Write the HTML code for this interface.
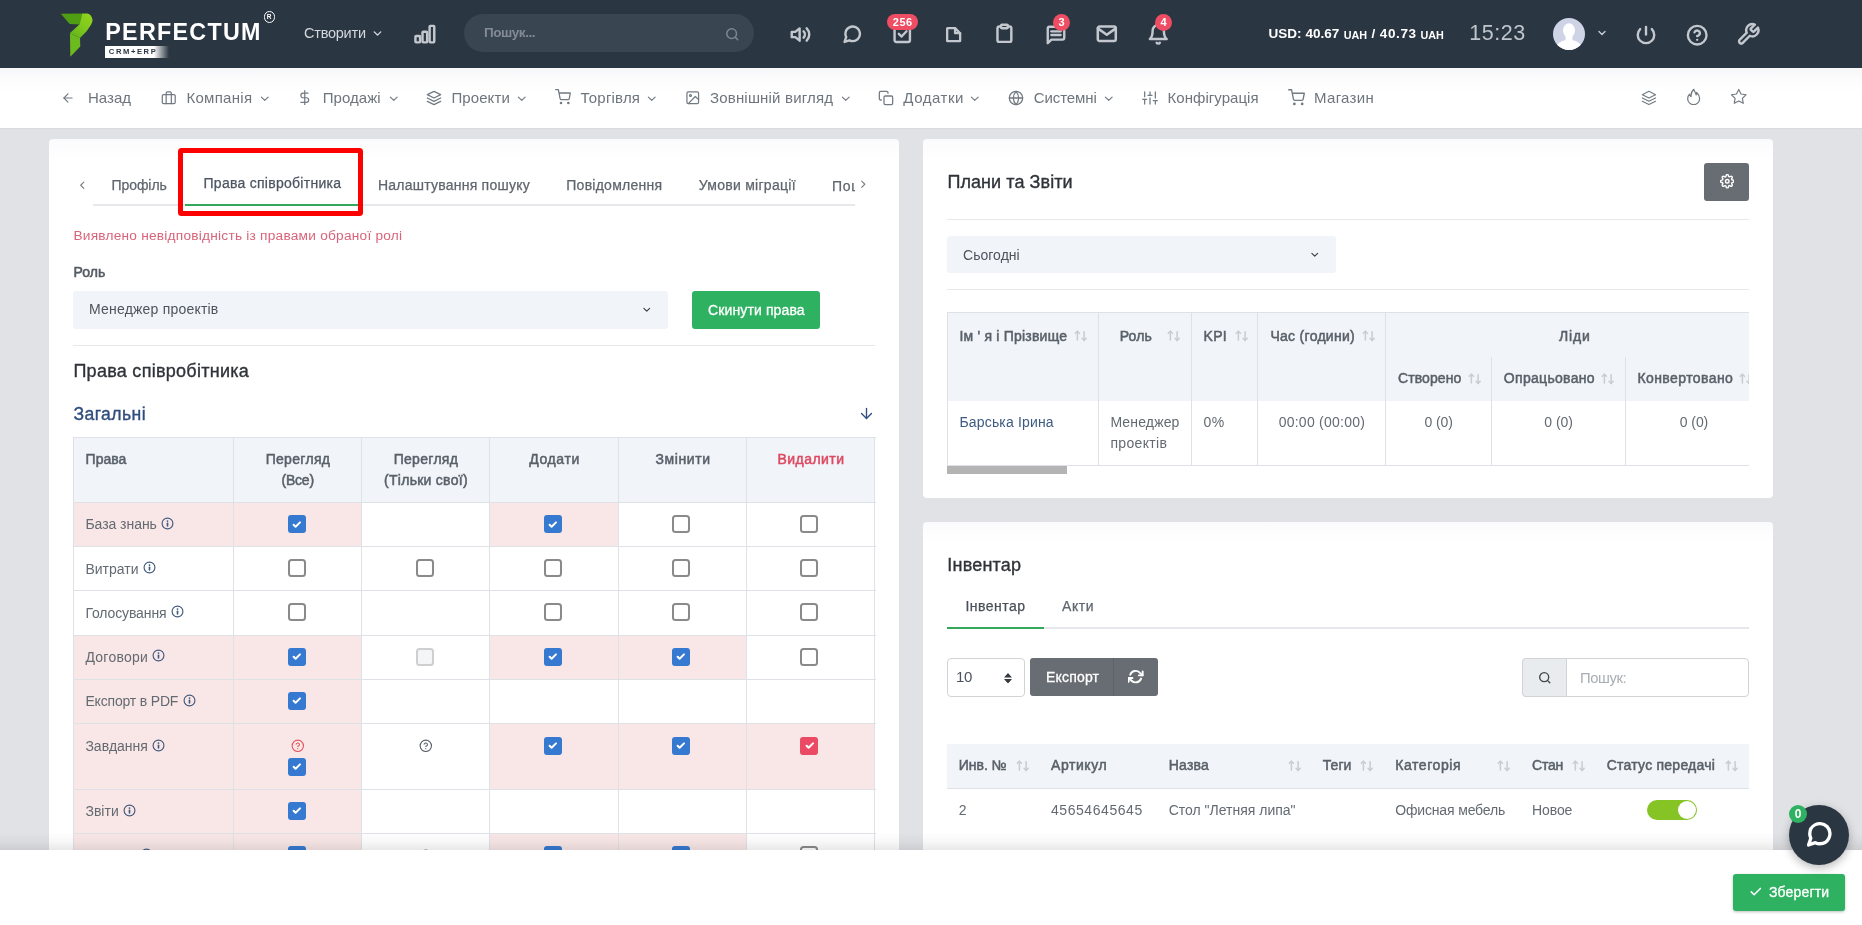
<!DOCTYPE html>
<html lang="uk"><head><meta charset="utf-8"><title>Perfectum CRM+ERP</title>
<style>
html,body{margin:0;padding:0}
body{width:1862px;height:925px;overflow:hidden;position:relative;background:#e1e2e5;font-family:"Liberation Sans",sans-serif;}
.a{position:absolute;box-sizing:border-box}
.t{white-space:pre}
</style></head>
<body>
<div class="a" style="left:0;top:0;width:1862px;height:925px;overflow:hidden;will-change:transform">
<div class="a" style="left:0px;top:0px;width:1862px;height:68px;background:#2b3643;"></div>
<svg class="a" style="left:58px;top:10px" width="40" height="50" viewBox="58 10 40 50">
<defs><linearGradient id="lg2" x1="1" y1="0" x2="0.200" y2="1"><stop offset="0" stop-color="#93d61b"/><stop offset=".55" stop-color="#7fc81d"/><stop offset="1" stop-color="#64b31c"/></linearGradient></defs>
<polygon points="60.800,13.700 83,13.500 81.500,19 79.800,24.400 69.700,23.900" fill="#4f9d12"/>
<path d="M82.400,13.600 Q85,13.200 87.500,13.600 Q91.800,14.600 92.600,20.300 Q92.300,23 90.500,25.600 L86.400,31.500 L80,37.900 L70,33.100 L79.600,24.300 Q81.200,19 82.400,13.600 Z" fill="url(#lg2)"/>
<polygon points="70,33.100 80,37.900 80.300,46.500 70.300,56.700" fill="#6cba1e"/>
</svg>
<div class="a t" style="top:17.78px;font-size:23.3px;line-height:28px;color:#fff;font-weight:700;letter-spacing:1.278px;left:105.3px;">PERFECTUM</div>
<div class="a" style="left:263.5px;top:11.4px;width:11.2px;height:11.2px;border:1.300px solid #fff;border-radius:6px;"></div>
<div class="a t" style="top:13.35px;font-size:6.5px;line-height:8px;color:#fff;font-weight:700;left:-30.90px;width:600px;text-align:center;">R</div>
<div class="a" style="left:105.4px;top:45.5px;width:63.4px;height:12.2px;background:linear-gradient(90deg,#fff 0,#fff 76%,rgba(255,255,255,0) 100%);"></div>
<div class="a t" style="top:46.57px;font-size:7.6px;line-height:10px;color:#2b3643;font-weight:700;letter-spacing:1.604px;left:108.8px;">CRM+ERP</div>
<div class="a t" style="top:22.98px;font-size:14.5px;line-height:20px;color:#d5d9de;letter-spacing:-0.232px;left:304px;">Створити</div>
<svg class="a" style="left:370.5px;top:26.8px;" width="13" height="13" viewBox="0 0 24 24" fill="none" stroke="#d5d9de" stroke-width="2.6" stroke-linecap="round" stroke-linejoin="round"><polyline points="6 9 12 15 18 9"/></svg>
<svg class="a" style="left:412.6px;top:22.2px;" width="23.3" height="23.3" viewBox="0 0 24 24" fill="none" stroke="#c3c8ce" stroke-width="2.5" stroke-linecap="round" stroke-linejoin="round"><rect x="2.500" y="14.500" width="4.800" height="6.500" rx=".8"/><rect x="9.800" y="10" width="4.800" height="11" rx=".8"/><rect x="17.100" y="4" width="4.800" height="17" rx=".8"/></svg>
<div class="a" style="left:464px;top:14px;width:290px;height:38px;background:#3a4552;border-radius:19px;"></div>
<div class="a t" style="top:23.32px;font-size:13.5px;line-height:20px;color:#828b95;font-weight:700;letter-spacing:-0.460px;left:484px;">Пошук...</div>
<svg class="a" style="left:725px;top:26.5px;" width="14.5" height="14.5" viewBox="0 0 24 24" fill="none" stroke="#7d8690" stroke-width="2.6" stroke-linecap="round" stroke-linejoin="round"><circle cx="11" cy="11" r="8"/><line x1="21" y1="21" x2="16.65" y2="16.65"/></svg>
<svg class="a" style="left:790px;top:23.6px;" width="21" height="21" viewBox="0 0 24 24" fill="none" stroke="#c3c8ce" stroke-width="2.8" stroke-linecap="round" stroke-linejoin="round"><polygon points="11 5 6 9 2 9 2 15 6 15 11 19 11 5"/><path d="M19.07 4.93a10 10 0 0 1 0 14.14M15.54 8.46a5 5 0 0 1 0 7.07"/></svg>
<svg class="a" style="left:841.5px;top:23.8px;" width="20.5" height="20.5" viewBox="0 0 24 24" fill="none" stroke="#c3c8ce" stroke-width="2.8" stroke-linecap="round" stroke-linejoin="round"><path d="M21 11.5a8.38 8.38 0 0 1-.9 3.8 8.5 8.5 0 0 1-7.6 4.7 8.38 8.38 0 0 1-3.8-.9L3 21l1.9-5.7a8.38 8.38 0 0 1-.9-3.8 8.5 8.5 0 0 1 4.7-7.6 8.38 8.38 0 0 1 3.8-.9h.5a8.48 8.48 0 0 1 8 8v.5z"/></svg>
<svg class="a" style="left:891.5px;top:23.9px;" width="20.5" height="20.5" viewBox="0 0 24 24" fill="none" stroke="#c3c8ce" stroke-width="2.8" stroke-linecap="round" stroke-linejoin="round"><rect x="3" y="3" width="18" height="18" rx="2"/><polyline points="8 11.500 11.200 14.700 17 8.500"/></svg>
<svg class="a" style="left:945.3px;top:25.8px;" width="17.3" height="17.3" viewBox="0 0 24 24" fill="none" stroke="#c3c8ce" stroke-width="3.2" stroke-linecap="round" stroke-linejoin="round"><path d="M14 3H3.600a.6.6 0 0 0-.6.6v16.800a.6.6 0 0 0 .6.6h16.800a.6.6 0 0 0 .6-.6V10z"/><polyline points="14 3 14 10 21 10"/></svg>
<svg class="a" style="left:994.3px;top:22.6px;" width="20.8" height="20.8" viewBox="0 0 24 24" fill="none" stroke="#c3c8ce" stroke-width="2.8" stroke-linecap="round" stroke-linejoin="round"><path d="M16 4h2a2 2 0 0 1 2 2v14a2 2 0 0 1-2 2H6a2 2 0 0 1-2-2V6a2 2 0 0 1 2-2h2"/><rect x="8" y="2" width="8" height="4" rx="1" ry="1"/></svg>
<svg class="a" style="left:1045px;top:23.5px;" width="22" height="22" viewBox="0 0 24 24" fill="none" stroke="#c3c8ce" stroke-width="2.6" stroke-linecap="round" stroke-linejoin="round"><path d="M21 15a2 2 0 0 1-2 2H7l-4 4V5a2 2 0 0 1 2-2h14a2 2 0 0 1 2 2z"/><line x1="7" y1="8" x2="17" y2="8"/><line x1="7" y1="12" x2="17" y2="12"/></svg>
<svg class="a" style="left:1096.2px;top:23.1px;" width="21.6" height="21.6" viewBox="0 0 24 24" fill="none" stroke="#c3c8ce" stroke-width="2.8" stroke-linecap="round" stroke-linejoin="round"><path d="M4 4h16c1.1 0 2 .9 2 2v12c0 1.1-.9 2-2 2H4c-1.1 0-2-.9-2-2V6c0-1.1.9-2 2-2z"/><polyline points="22,6 12,13 2,6"/></svg>
<svg class="a" style="left:1147px;top:23px;" width="22.5" height="22.5" viewBox="0 0 24 24" fill="none" stroke="#c3c8ce" stroke-width="2.6" stroke-linecap="round" stroke-linejoin="round"><path d="M18 8A6 6 0 0 0 6 8c0 7-3 9-3 9h18s-3-2-3-9"/><path d="M13.73 21a2 2 0 0 1-3.46 0"/></svg>
<div class="a" style="left:887px;top:14px;width:31px;height:16px;background:#ee4d64;border-radius:8px;"></div>
<div class="a t" style="top:15.19px;font-size:11px;line-height:14px;color:#fff;font-weight:700;letter-spacing:0.573px;left:602.79px;width:600px;text-align:center;">256</div>
<div class="a" style="left:1053px;top:14px;width:17px;height:16.5px;background:#ee4d64;border-radius:8.5px;"></div>
<div class="a t" style="top:15.39px;font-size:11px;line-height:14px;color:#fff;font-weight:700;left:761.50px;width:600px;text-align:center;">3</div>
<div class="a" style="left:1155px;top:14px;width:17px;height:16.5px;background:#ee4d64;border-radius:8.5px;"></div>
<div class="a t" style="top:15.39px;font-size:11px;line-height:14px;color:#fff;font-weight:700;left:863.50px;width:600px;text-align:center;">4</div>
<div class="a t" style="top:23.62px;font-size:13.5px;line-height:20px;color:#fff;font-weight:700;letter-spacing:0.007px;left:1268.6px;">USD: 40.67</div>
<div class="a t" style="top:24.56px;font-size:10.8px;line-height:20px;color:#fff;font-weight:700;letter-spacing:-0.099px;left:1343.8px;">UAH</div>
<div class="a t" style="top:23.62px;font-size:13.5px;line-height:20px;color:#fff;font-weight:700;left:1371.4px;">/</div>
<div class="a t" style="top:23.62px;font-size:13.5px;line-height:20px;color:#fff;font-weight:700;letter-spacing:0.604px;left:1379.8px;">40.73</div>
<div class="a t" style="top:24.56px;font-size:10.8px;line-height:20px;color:#fff;font-weight:700;letter-spacing:-0.099px;left:1420.5px;">UAH</div>
<div class="a t" style="top:20.15px;font-size:21.5px;line-height:26px;color:#bfc5cc;letter-spacing:0.549px;left:1469.3px;">15:23</div>
<svg class="a" style="left:1553px;top:17.500px" width="32" height="32" viewBox="0 0 32 32"><defs><clipPath id="av"><circle cx="16" cy="16" r="16"/></clipPath></defs>
<circle cx="16" cy="16" r="16" fill="#ced3e6"/><g clip-path="url(#av)" fill="#fff"><ellipse cx="16" cy="12.500" rx="6" ry="7.200"/><path d="M12.500 17.500h7v4.500c3 1.200 7 2 8.500 5.500V33H4v-5.500c1.500-3.500 5.500-4.300 8.500-5.500z"/></g></svg>
<svg class="a" style="left:1595.5px;top:27px;" width="12" height="12" viewBox="0 0 24 24" fill="none" stroke="#c8cdd3" stroke-width="2.8" stroke-linecap="round" stroke-linejoin="round"><polyline points="6 9 12 15 18 9"/></svg>
<svg class="a" style="left:1635px;top:22.5px;" width="22" height="22" viewBox="0 0 24 24" fill="none" stroke="#c3c8ce" stroke-width="2.6" stroke-linecap="round" stroke-linejoin="round"><path d="M18.36 6.64a9 9 0 1 1-12.73 0"/><line x1="12" y1="4.200" x2="12" y2="12.500"/></svg>
<svg class="a" style="left:1685.6px;top:23.7px;" width="22.4" height="22.4" viewBox="0 0 24 24" fill="none" stroke="#c3c8ce" stroke-width="2.5" stroke-linecap="round" stroke-linejoin="round"><circle cx="12" cy="12" r="10"/><path d="M9.09 9a3 3 0 0 1 5.83 1c0 2-3 3-3 3"/><line x1="12" y1="17" x2="12.01" y2="17"/></svg>
<svg class="a" style="left:1735.5px;top:22px;" width="24.5" height="24.5" viewBox="0 0 24 24" fill="none" stroke="#c3c8ce" stroke-width="2.4" stroke-linecap="round" stroke-linejoin="round"><path d="M14.7 6.3a1 1 0 0 0 0 1.4l1.6 1.6a1 1 0 0 0 1.4 0l3.77-3.77a6 6 0 0 1-7.94 7.94l-6.91 6.91a2.12 2.12 0 0 1-3-3l6.91-6.91a6 6 0 0 1 7.94-7.94l-3.76 3.76z"/></svg>
<div class="a" style="left:0px;top:68px;width:1862px;height:60px;background:linear-gradient(180deg,#f7f7f9 0,#fcfcfd 12px,#fff 24px);"></div>
<div class="a" style="left:0px;top:128px;width:1862px;height:2px;background:linear-gradient(180deg,rgba(0,0,0,.035),rgba(0,0,0,0));"></div>
<svg class="a" style="left:61px;top:90.5px;" width="14" height="14" viewBox="0 0 24 24" fill="none" stroke="#727a82" stroke-width="2" stroke-linecap="round" stroke-linejoin="round"><line x1="19" y1="12" x2="5" y2="12"/><polyline points="12 19 5 12 12 5"/></svg>
<div class="a t" style="top:87.70px;font-size:15px;line-height:20px;color:#6d757d;letter-spacing:0.005px;left:88px;">Назад</div>
<svg class="a" style="left:161px;top:89.75px;" width="15.5" height="15.5" viewBox="0 0 24 24" fill="none" stroke="#727a82" stroke-width="1.9" stroke-linecap="round" stroke-linejoin="round"><rect x="2" y="7" width="20" height="14" rx="2" ry="2"/><path d="M16 21V5a2 2 0 0 0-2-2h-4a2 2 0 0 0-2 2v16"/></svg>
<div class="a t" style="top:87.70px;font-size:15px;line-height:20px;color:#6d757d;letter-spacing:0.272px;left:186.5px;">Компанія</div>
<svg class="a" style="left:257.8px;top:91.5px;" width="13.5" height="13.5" viewBox="0 0 24 24" fill="none" stroke="#727a82" stroke-width="2.1" stroke-linecap="round" stroke-linejoin="round"><polyline points="6 9 12 15 18 9"/></svg>
<svg class="a" style="left:296.5px;top:89.75px;" width="15.5" height="15.5" viewBox="0 0 24 24" fill="none" stroke="#727a82" stroke-width="1.9" stroke-linecap="round" stroke-linejoin="round"><line x1="12" y1="1" x2="12" y2="23"/><path d="M17 5H9.5a3.5 3.5 0 0 0 0 7h5a3.5 3.5 0 0 1 0 7H6"/></svg>
<div class="a t" style="top:87.70px;font-size:15px;line-height:20px;color:#6d757d;letter-spacing:0.067px;left:322.7px;">Продажі</div>
<svg class="a" style="left:386.8px;top:91.5px;" width="13.5" height="13.5" viewBox="0 0 24 24" fill="none" stroke="#727a82" stroke-width="2.1" stroke-linecap="round" stroke-linejoin="round"><polyline points="6 9 12 15 18 9"/></svg>
<svg class="a" style="left:425.5px;top:89.5px;" width="16" height="16" viewBox="0 0 24 24" fill="none" stroke="#727a82" stroke-width="1.9" stroke-linecap="round" stroke-linejoin="round"><polygon points="12 2 2 7 12 12 22 7 12 2"/><polyline points="2 17 12 22 22 17"/><polyline points="2 12 12 17 22 12"/></svg>
<div class="a t" style="top:87.70px;font-size:15px;line-height:20px;color:#6d757d;letter-spacing:0.102px;left:451.4px;">Проекти</div>
<svg class="a" style="left:515.3px;top:91.5px;" width="13.5" height="13.5" viewBox="0 0 24 24" fill="none" stroke="#727a82" stroke-width="2.1" stroke-linecap="round" stroke-linejoin="round"><polyline points="6 9 12 15 18 9"/></svg>
<svg class="a" style="left:554.5px;top:89px;" width="16" height="16" viewBox="0 0 24 24" fill="none" stroke="#727a82" stroke-width="1.9" stroke-linecap="round" stroke-linejoin="round"><circle cx="9" cy="21" r="1"/><circle cx="20" cy="21" r="1"/><path d="M1 1h4l2.68 13.39a2 2 0 0 0 2 1.61h9.72a2 2 0 0 0 2-1.61L23 6H6"/></svg>
<div class="a t" style="top:87.70px;font-size:15px;line-height:20px;color:#6d757d;letter-spacing:0.203px;left:580.6px;">Торгівля</div>
<svg class="a" style="left:645.3px;top:91.5px;" width="13.5" height="13.5" viewBox="0 0 24 24" fill="none" stroke="#727a82" stroke-width="2.1" stroke-linecap="round" stroke-linejoin="round"><polyline points="6 9 12 15 18 9"/></svg>
<svg class="a" style="left:684.5px;top:89.75px;" width="15.5" height="15.5" viewBox="0 0 24 24" fill="none" stroke="#727a82" stroke-width="1.9" stroke-linecap="round" stroke-linejoin="round"><rect x="3" y="3" width="18" height="18" rx="2" ry="2"/><circle cx="8.5" cy="8.5" r="1.5"/><polyline points="21 15 16 10 5 21"/></svg>
<div class="a t" style="top:87.70px;font-size:15px;line-height:20px;color:#6d757d;letter-spacing:0.180px;left:710px;">Зовнішній вигляд</div>
<svg class="a" style="left:838.8px;top:91.5px;" width="13.5" height="13.5" viewBox="0 0 24 24" fill="none" stroke="#727a82" stroke-width="2.1" stroke-linecap="round" stroke-linejoin="round"><polyline points="6 9 12 15 18 9"/></svg>
<svg class="a" style="left:878px;top:89.5px;" width="16" height="16" viewBox="0 0 24 24" fill="none" stroke="#727a82" stroke-width="1.9" stroke-linecap="round" stroke-linejoin="round"><rect x="9" y="9" width="13" height="13" rx="2" ry="2"/><path d="M5 15H4a2 2 0 0 1-2-2V4a2 2 0 0 1 2-2h9a2 2 0 0 1 2 2v1"/></svg>
<div class="a t" style="top:87.70px;font-size:15px;line-height:20px;color:#6d757d;letter-spacing:0.547px;left:903.3px;">Додатки</div>
<svg class="a" style="left:968.3px;top:91.5px;" width="13.5" height="13.5" viewBox="0 0 24 24" fill="none" stroke="#727a82" stroke-width="2.1" stroke-linecap="round" stroke-linejoin="round"><polyline points="6 9 12 15 18 9"/></svg>
<svg class="a" style="left:1008px;top:89.5px;" width="16" height="16" viewBox="0 0 24 24" fill="none" stroke="#727a82" stroke-width="1.9" stroke-linecap="round" stroke-linejoin="round"><circle cx="12" cy="12" r="10"/><line x1="2" y1="12" x2="22" y2="12"/><path d="M12 2a15.3 15.3 0 0 1 4 10 15.3 15.3 0 0 1-4 10 15.3 15.3 0 0 1-4-10 15.3 15.3 0 0 1 4-10z"/></svg>
<div class="a t" style="top:87.70px;font-size:15px;line-height:20px;color:#6d757d;letter-spacing:-0.083px;left:1033.7px;">Системні</div>
<svg class="a" style="left:1102.3px;top:91.5px;" width="13.5" height="13.5" viewBox="0 0 24 24" fill="none" stroke="#727a82" stroke-width="2.1" stroke-linecap="round" stroke-linejoin="round"><polyline points="6 9 12 15 18 9"/></svg>
<svg class="a" style="left:1141.5px;top:89.5px;" width="16" height="16" viewBox="0 0 24 24" fill="none" stroke="#727a82" stroke-width="1.9" stroke-linecap="round" stroke-linejoin="round"><line x1="4" y1="21" x2="4" y2="14"/><line x1="4" y1="10" x2="4" y2="3"/><line x1="12" y1="21" x2="12" y2="12"/><line x1="12" y1="8" x2="12" y2="3"/><line x1="20" y1="21" x2="20" y2="16"/><line x1="20" y1="12" x2="20" y2="3"/><line x1="1" y1="14" x2="7" y2="14"/><line x1="9" y1="8" x2="15" y2="8"/><line x1="17" y1="16" x2="23" y2="16"/></svg>
<div class="a t" style="top:87.70px;font-size:15px;line-height:20px;color:#6d757d;letter-spacing:0.048px;left:1167.5px;">Конфігурація</div>
<svg class="a" style="left:1288px;top:89px;" width="17" height="17" viewBox="0 0 24 24" fill="none" stroke="#727a82" stroke-width="1.9" stroke-linecap="round" stroke-linejoin="round"><circle cx="9" cy="21" r="1"/><circle cx="20" cy="21" r="1"/><path d="M1 1h4l2.68 13.39a2 2 0 0 0 2 1.61h9.72a2 2 0 0 0 2-1.61L23 6H6"/></svg>
<div class="a t" style="top:87.70px;font-size:15px;line-height:20px;color:#6d757d;letter-spacing:0.323px;left:1314px;">Магазин</div>
<svg class="a" style="left:1641px;top:89.9px;" width="15.9" height="15.9" viewBox="0 0 24 24" fill="none" stroke="#727a82" stroke-width="1.7" stroke-linecap="round" stroke-linejoin="round"><polygon points="12 2 2 7 12 12 22 7 12 2"/><polyline points="2 17 12 22 22 17"/><polyline points="2 12 12 17 22 12"/></svg>
<svg class="a" style="left:1685.2px;top:87.9px;" width="17.3" height="17.3" viewBox="0 0 24 24" fill="none" stroke="#727a82" stroke-width="1.7" stroke-linecap="round" stroke-linejoin="round"><path d="M12.300 1.800C12.600 4.800 15 6.300 15.400 9.400C16.100 8.500 16.400 7.400 16.200 6.200C18.700 8.600 20.300 11.800 20.300 14.800A8.300 8.300 0 0 1 3.700 14.800C3.700 12.300 4.700 10.200 6.300 8.700C6.500 10.300 7.200 11.500 8.400 12.100C8 8 9.500 4.300 12.300 1.800Z"/></svg>
<svg class="a" style="left:1730px;top:88px;" width="17.5" height="17.5" viewBox="0 0 24 24" fill="none" stroke="#727a82" stroke-width="1.6" stroke-linecap="round" stroke-linejoin="round"><polygon points="12 2 15.09 8.26 22 9.27 17 14.14 18.18 21.02 12 17.77 5.82 21.02 7 14.14 2 9.27 8.91 8.26 12 2"/></svg>
<div class="a" style="left:49px;top:139px;width:850px;height:800px;background:linear-gradient(180deg,#fbfbfd 0,#fff 22px);border-radius:4px;"></div>
<div class="a" style="left:93px;top:204px;width:762px;height:2px;background:#e7e8eb;"></div>
<div class="a" style="left:185px;top:204px;width:173px;height:2px;background:#34a85a;"></div>
<svg class="a" style="left:75.5px;top:178.5px;" width="12.5" height="12.5" viewBox="0 0 24 24" fill="none" stroke="#7a8087" stroke-width="2.2" stroke-linecap="round" stroke-linejoin="round"><polyline points="15 18 9 12 15 6"/></svg>
<svg class="a" style="left:856.5px;top:177.5px;" width="12.5" height="12.5" viewBox="0 0 24 24" fill="none" stroke="#7a8087" stroke-width="2.2" stroke-linecap="round" stroke-linejoin="round"><polyline points="9 18 15 12 9 6"/></svg>
<div class="a t" style="top:175.25px;font-size:14px;line-height:20px;color:#5f666e;letter-spacing:-0.071px;left:111.5px;-webkit-text-stroke:0.25px;">Профіль</div>
<div class="a t" style="top:173.45px;font-size:14px;line-height:20px;color:#4c5562;letter-spacing:0.272px;left:203.5px;-webkit-text-stroke:0.25px;">Права співробітника</div>
<div class="a t" style="top:175.25px;font-size:14px;line-height:20px;color:#5f666e;letter-spacing:0.237px;left:377.9px;-webkit-text-stroke:0.25px;">Налаштування пошуку</div>
<div class="a t" style="top:175.25px;font-size:14px;line-height:20px;color:#5f666e;letter-spacing:0.248px;left:566.3px;-webkit-text-stroke:0.25px;">Повідомлення</div>
<div class="a t" style="top:175.25px;font-size:14px;line-height:20px;color:#5f666e;letter-spacing:0.280px;left:698.7px;-webkit-text-stroke:0.25px;">Умови міграції</div>
<div class="a" style="left:832px;top:170px;width:22.700px;height:30px;overflow:hidden"><div class="a t" style="top:5.55px;font-size:14px;line-height:20px;color:#5f666e;letter-spacing:0.699px;left:0px;-webkit-text-stroke:0.25px;">Пошук</div></div>
<div class="a" style="left:178px;top:148px;width:184.7px;height:67.6px;border:5px solid #fd0000;border-radius:3.5px;"></div>
<div class="a t" style="top:225.55px;font-size:13.7px;line-height:20px;color:#d9647a;letter-spacing:0.230px;left:73.4px;">Виявлено невідповідність із правами обраної ролі</div>
<div class="a t" style="top:262.15px;font-size:14px;line-height:20px;color:#555b63;letter-spacing:0.112px;left:73.4px;-webkit-text-stroke:0.55px;">Роль</div>
<div class="a" style="left:73px;top:291px;width:595px;height:38px;background:#f1f4f8;border-radius:3px;"></div>
<div class="a t" style="top:299.45px;font-size:14px;line-height:20px;color:#4d545c;letter-spacing:0.207px;left:89px;">Менеджер проектів</div>
<svg class="a" style="left:640.5px;top:304.3px;" width="11.5" height="11.5" viewBox="0 0 24 24" fill="none" stroke="#3a4047" stroke-width="2.4" stroke-linecap="round" stroke-linejoin="round"><polyline points="6 9 12 15 18 9"/></svg>
<div class="a" style="left:692px;top:291px;width:128px;height:38px;background:#2fb162;border-radius:3px;"></div>
<div class="a t" style="top:299.75px;font-size:14px;line-height:20px;color:#fff;letter-spacing:0.123px;left:708px;-webkit-text-stroke:0.3px;">Скинути права</div>
<div class="a" style="left:73px;top:345px;width:802px;height:1px;background:#e7e8ea;"></div>
<div class="a t" style="top:360.26px;font-size:18px;line-height:22px;color:#2f3338;letter-spacing:0.273px;left:73.4px;-webkit-text-stroke:0.35px;">Права співробітника</div>
<div class="a t" style="top:402.90px;font-size:17.6px;line-height:22px;color:#2f4d7e;letter-spacing:0.413px;left:73.4px;-webkit-text-stroke:0.35px;">Загальні</div>
<svg class="a" style="left:857.5px;top:405px;" width="17" height="17" viewBox="0 0 24 24" fill="none" stroke="#2f4d7e" stroke-width="1.9" stroke-linecap="round" stroke-linejoin="round"><line x1="12" y1="5" x2="12" y2="19"/><polyline points="19 12 12 19 5 12"/></svg>
<div class="a" style="left:73px;top:437px;width:802px;height:65.30000000000001px;background:#f1f4f8;"></div>
<div class="a" style="left:73px;top:502.3px;width:160px;height:44.099999999999966px;background:#f9e7e7;"></div>
<div class="a" style="left:233px;top:502.3px;width:128px;height:44.099999999999966px;background:#f9e7e7;"></div>
<div class="a" style="left:489px;top:502.3px;width:129px;height:44.099999999999966px;background:#f9e7e7;"></div>
<div class="a" style="left:73px;top:634.7px;width:160px;height:44.19999999999993px;background:#f9e7e7;"></div>
<div class="a" style="left:233px;top:634.7px;width:128px;height:44.19999999999993px;background:#f9e7e7;"></div>
<div class="a" style="left:489px;top:634.7px;width:129px;height:44.19999999999993px;background:#f9e7e7;"></div>
<div class="a" style="left:618px;top:634.7px;width:128px;height:44.19999999999993px;background:#f9e7e7;"></div>
<div class="a" style="left:73px;top:678.9px;width:160px;height:44.30000000000007px;background:#f9e7e7;"></div>
<div class="a" style="left:233px;top:678.9px;width:128px;height:44.30000000000007px;background:#f9e7e7;"></div>
<div class="a" style="left:73px;top:723.2px;width:160px;height:66.19999999999993px;background:#f9e7e7;"></div>
<div class="a" style="left:233px;top:723.2px;width:128px;height:66.19999999999993px;background:#f9e7e7;"></div>
<div class="a" style="left:489px;top:723.2px;width:129px;height:66.19999999999993px;background:#f9e7e7;"></div>
<div class="a" style="left:618px;top:723.2px;width:128px;height:66.19999999999993px;background:#f9e7e7;"></div>
<div class="a" style="left:746px;top:723.2px;width:128px;height:66.19999999999993px;background:#f9e7e7;"></div>
<div class="a" style="left:73px;top:789.4px;width:160px;height:43.80000000000007px;background:#f9e7e7;"></div>
<div class="a" style="left:233px;top:789.4px;width:128px;height:43.80000000000007px;background:#f9e7e7;"></div>
<div class="a" style="left:73px;top:833.2px;width:160px;height:44.19999999999993px;background:#f9e7e7;"></div>
<div class="a" style="left:233px;top:833.2px;width:128px;height:44.19999999999993px;background:#f9e7e7;"></div>
<div class="a" style="left:489px;top:833.2px;width:129px;height:44.19999999999993px;background:#f9e7e7;"></div>
<div class="a" style="left:618px;top:833.2px;width:128px;height:44.19999999999993px;background:#f9e7e7;"></div>
<div class="a" style="left:73px;top:437px;width:803px;height:1px;background:#dee2e6;"></div>
<div class="a" style="left:73px;top:502px;width:803px;height:1px;background:#dee2e6;"></div>
<div class="a" style="left:73px;top:546px;width:803px;height:1px;background:#dee2e6;"></div>
<div class="a" style="left:73px;top:590px;width:803px;height:1px;background:#dee2e6;"></div>
<div class="a" style="left:73px;top:635px;width:803px;height:1px;background:#dee2e6;"></div>
<div class="a" style="left:73px;top:679px;width:803px;height:1px;background:#dee2e6;"></div>
<div class="a" style="left:73px;top:723px;width:803px;height:1px;background:#dee2e6;"></div>
<div class="a" style="left:73px;top:789px;width:803px;height:1px;background:#dee2e6;"></div>
<div class="a" style="left:73px;top:833px;width:803px;height:1px;background:#dee2e6;"></div>
<div class="a" style="left:73px;top:877px;width:803px;height:1px;background:#dee2e6;"></div>
<div class="a" style="left:73px;top:437px;width:1px;height:441px;background:#dee2e6;"></div>
<div class="a" style="left:233px;top:437px;width:1px;height:441px;background:#dee2e6;"></div>
<div class="a" style="left:361px;top:437px;width:1px;height:441px;background:#dee2e6;"></div>
<div class="a" style="left:489px;top:437px;width:1px;height:441px;background:#dee2e6;"></div>
<div class="a" style="left:618px;top:437px;width:1px;height:441px;background:#dee2e6;"></div>
<div class="a" style="left:746px;top:437px;width:1px;height:441px;background:#dee2e6;"></div>
<div class="a" style="left:874px;top:437px;width:1px;height:441px;background:#dee2e6;"></div>
<div class="a t" style="top:448.55px;font-size:14px;line-height:20px;color:#596068;letter-spacing:-0.025px;left:85.6px;-webkit-text-stroke:0.5px;">Права</div>
<div class="a t" style="top:448.55px;font-size:14px;line-height:20px;color:#596068;letter-spacing:0.309px;left:-2.05px;width:600px;text-align:center;-webkit-text-stroke:0.5px;">Перегляд</div>
<div class="a t" style="top:469.55px;font-size:14px;line-height:20px;color:#596068;letter-spacing:-0.237px;left:-2.32px;width:600px;text-align:center;-webkit-text-stroke:0.5px;">(Все)</div>
<div class="a t" style="top:448.55px;font-size:14px;line-height:20px;color:#596068;letter-spacing:0.309px;left:125.95px;width:600px;text-align:center;-webkit-text-stroke:0.5px;">Перегляд</div>
<div class="a t" style="top:469.55px;font-size:14px;line-height:20px;color:#596068;letter-spacing:0.272px;left:125.94px;width:600px;text-align:center;-webkit-text-stroke:0.5px;">(Тільки свої)</div>
<div class="a t" style="top:448.55px;font-size:14px;line-height:20px;color:#596068;letter-spacing:0.600px;left:254.60px;width:600px;text-align:center;-webkit-text-stroke:0.5px;">Додати</div>
<div class="a t" style="top:448.55px;font-size:14px;line-height:20px;color:#596068;letter-spacing:0.587px;left:383.09px;width:600px;text-align:center;-webkit-text-stroke:0.5px;">Змінити</div>
<div class="a t" style="top:448.55px;font-size:14px;line-height:20px;color:#dc4a62;letter-spacing:0.452px;left:511.03px;width:600px;text-align:center;-webkit-text-stroke:0.5px;">Видалити</div>
<div class="a t" style="top:514.40px;font-size:14px;line-height:20px;color:#636a71;letter-spacing:-0.041px;left:85.4px;">База знань</div>
<svg class="a" style="left:161.0px;top:516.95px;" width="13" height="13" viewBox="0 0 24 24" fill="none" stroke="#41597d" stroke-width="2.1" stroke-linecap="round" stroke-linejoin="round"><circle cx="12" cy="12" r="10"/><line x1="12" y1="16.600" x2="12" y2="11.600" stroke-width="3"/><line x1="12" y1="7.600" x2="12.01" y2="7.600" stroke-width="3.300"/></svg>
<div class="a" style="left:288px;top:515.2px;width:18px;height:18px;background:#3579d1;border-radius:3px;"></div>
<svg class="a" style="left:292.3px;top:519.5px;" width="9.6" height="9.6" viewBox="0 0 24 24" fill="none" stroke="#fff" stroke-width="5" stroke-linecap="round" stroke-linejoin="round"><polyline points="20 6 9 17 4 12"/></svg>
<div class="a" style="left:544px;top:515.2px;width:18px;height:18px;background:#3579d1;border-radius:3px;"></div>
<svg class="a" style="left:548.3px;top:519.5px;" width="9.6" height="9.6" viewBox="0 0 24 24" fill="none" stroke="#fff" stroke-width="5" stroke-linecap="round" stroke-linejoin="round"><polyline points="20 6 9 17 4 12"/></svg>
<div class="a" style="left:672.1px;top:515.2px;width:18px;height:18px;background:#fff;border:2px solid #8a8a8a;border-radius:3.5px;"></div>
<div class="a" style="left:800.2px;top:515.2px;width:18px;height:18px;background:#fff;border:2px solid #8a8a8a;border-radius:3.5px;"></div>
<div class="a t" style="top:558.50px;font-size:14px;line-height:20px;color:#636a71;letter-spacing:0.005px;left:85.4px;">Витрати</div>
<svg class="a" style="left:142.6px;top:561.0500000000001px;" width="13" height="13" viewBox="0 0 24 24" fill="none" stroke="#41597d" stroke-width="2.1" stroke-linecap="round" stroke-linejoin="round"><circle cx="12" cy="12" r="10"/><line x1="12" y1="16.600" x2="12" y2="11.600" stroke-width="3"/><line x1="12" y1="7.600" x2="12.01" y2="7.600" stroke-width="3.300"/></svg>
<div class="a" style="left:288px;top:559.3000000000001px;width:18px;height:18px;background:#fff;border:2px solid #8a8a8a;border-radius:3.5px;"></div>
<div class="a" style="left:416px;top:559.3000000000001px;width:18px;height:18px;background:#fff;border:2px solid #8a8a8a;border-radius:3.5px;"></div>
<div class="a" style="left:544px;top:559.3000000000001px;width:18px;height:18px;background:#fff;border:2px solid #8a8a8a;border-radius:3.5px;"></div>
<div class="a" style="left:672.1px;top:559.3000000000001px;width:18px;height:18px;background:#fff;border:2px solid #8a8a8a;border-radius:3.5px;"></div>
<div class="a" style="left:800.2px;top:559.3000000000001px;width:18px;height:18px;background:#fff;border:2px solid #8a8a8a;border-radius:3.5px;"></div>
<div class="a t" style="top:602.65px;font-size:14px;line-height:20px;color:#636a71;letter-spacing:-0.115px;left:85.4px;">Голосування</div>
<svg class="a" style="left:170.70000000000002px;top:605.2px;" width="13" height="13" viewBox="0 0 24 24" fill="none" stroke="#41597d" stroke-width="2.1" stroke-linecap="round" stroke-linejoin="round"><circle cx="12" cy="12" r="10"/><line x1="12" y1="16.600" x2="12" y2="11.600" stroke-width="3"/><line x1="12" y1="7.600" x2="12.01" y2="7.600" stroke-width="3.300"/></svg>
<div class="a" style="left:288px;top:603.45px;width:18px;height:18px;background:#fff;border:2px solid #8a8a8a;border-radius:3.5px;"></div>
<div class="a" style="left:544px;top:603.45px;width:18px;height:18px;background:#fff;border:2px solid #8a8a8a;border-radius:3.5px;"></div>
<div class="a" style="left:672.1px;top:603.45px;width:18px;height:18px;background:#fff;border:2px solid #8a8a8a;border-radius:3.5px;"></div>
<div class="a" style="left:800.2px;top:603.45px;width:18px;height:18px;background:#fff;border:2px solid #8a8a8a;border-radius:3.5px;"></div>
<div class="a t" style="top:646.85px;font-size:14px;line-height:20px;color:#636a71;letter-spacing:0.260px;left:85.4px;">Договори</div>
<svg class="a" style="left:152.0px;top:649.4px;" width="13" height="13" viewBox="0 0 24 24" fill="none" stroke="#41597d" stroke-width="2.1" stroke-linecap="round" stroke-linejoin="round"><circle cx="12" cy="12" r="10"/><line x1="12" y1="16.600" x2="12" y2="11.600" stroke-width="3"/><line x1="12" y1="7.600" x2="12.01" y2="7.600" stroke-width="3.300"/></svg>
<div class="a" style="left:288px;top:647.65px;width:18px;height:18px;background:#3579d1;border-radius:3px;"></div>
<svg class="a" style="left:292.3px;top:651.9499999999999px;" width="9.6" height="9.6" viewBox="0 0 24 24" fill="none" stroke="#fff" stroke-width="5" stroke-linecap="round" stroke-linejoin="round"><polyline points="20 6 9 17 4 12"/></svg>
<div class="a" style="left:416px;top:647.65px;width:18px;height:18px;background:#f4f5f6;border:2px solid #cfcfcf;border-radius:3.5px;"></div>
<div class="a" style="left:544px;top:647.65px;width:18px;height:18px;background:#3579d1;border-radius:3px;"></div>
<svg class="a" style="left:548.3px;top:651.9499999999999px;" width="9.6" height="9.6" viewBox="0 0 24 24" fill="none" stroke="#fff" stroke-width="5" stroke-linecap="round" stroke-linejoin="round"><polyline points="20 6 9 17 4 12"/></svg>
<div class="a" style="left:672.1px;top:647.65px;width:18px;height:18px;background:#3579d1;border-radius:3px;"></div>
<svg class="a" style="left:676.4px;top:651.9499999999999px;" width="9.6" height="9.6" viewBox="0 0 24 24" fill="none" stroke="#fff" stroke-width="5" stroke-linecap="round" stroke-linejoin="round"><polyline points="20 6 9 17 4 12"/></svg>
<div class="a" style="left:800.2px;top:647.65px;width:18px;height:18px;background:#fff;border:2px solid #8a8a8a;border-radius:3.5px;"></div>
<div class="a t" style="top:691.10px;font-size:14px;line-height:20px;color:#636a71;letter-spacing:-0.175px;left:85.4px;">Експорт в PDF</div>
<svg class="a" style="left:182.5px;top:693.65px;" width="13" height="13" viewBox="0 0 24 24" fill="none" stroke="#41597d" stroke-width="2.1" stroke-linecap="round" stroke-linejoin="round"><circle cx="12" cy="12" r="10"/><line x1="12" y1="16.600" x2="12" y2="11.600" stroke-width="3"/><line x1="12" y1="7.600" x2="12.01" y2="7.600" stroke-width="3.300"/></svg>
<div class="a" style="left:288px;top:691.9px;width:18px;height:18px;background:#3579d1;border-radius:3px;"></div>
<svg class="a" style="left:292.3px;top:696.1999999999999px;" width="9.6" height="9.6" viewBox="0 0 24 24" fill="none" stroke="#fff" stroke-width="5" stroke-linecap="round" stroke-linejoin="round"><polyline points="20 6 9 17 4 12"/></svg>
<div class="a t" style="top:801.35px;font-size:14px;line-height:20px;color:#636a71;letter-spacing:0.041px;left:85.4px;">Звіти</div>
<svg class="a" style="left:122.9px;top:803.9px;" width="13" height="13" viewBox="0 0 24 24" fill="none" stroke="#41597d" stroke-width="2.1" stroke-linecap="round" stroke-linejoin="round"><circle cx="12" cy="12" r="10"/><line x1="12" y1="16.600" x2="12" y2="11.600" stroke-width="3"/><line x1="12" y1="7.600" x2="12.01" y2="7.600" stroke-width="3.300"/></svg>
<div class="a" style="left:288px;top:802.15px;width:18px;height:18px;background:#3579d1;border-radius:3px;"></div>
<svg class="a" style="left:292.3px;top:806.4499999999999px;" width="9.6" height="9.6" viewBox="0 0 24 24" fill="none" stroke="#fff" stroke-width="5" stroke-linecap="round" stroke-linejoin="round"><polyline points="20 6 9 17 4 12"/></svg>
<div class="a t" style="top:735.95px;font-size:14px;line-height:20px;color:#636a71;left:85.4px;">Завдання</div>
<svg class="a" style="left:152.0px;top:738.5px;" width="13" height="13" viewBox="0 0 24 24" fill="none" stroke="#41597d" stroke-width="2.1" stroke-linecap="round" stroke-linejoin="round"><circle cx="12" cy="12" r="10"/><line x1="12" y1="16.600" x2="12" y2="11.600" stroke-width="3"/><line x1="12" y1="7.600" x2="12.01" y2="7.600" stroke-width="3.300"/></svg>
<svg class="a" style="left:291.2px;top:738.8px;" width="13.6" height="13.6" viewBox="0 0 24 24" fill="none" stroke="#e2555f" stroke-width="2" stroke-linecap="round" stroke-linejoin="round"><circle cx="12" cy="12" r="10"/><path d="M9.09 9a3 3 0 0 1 5.83 1c0 2-3 3-3 3"/><line x1="12" y1="17" x2="12.01" y2="17"/></svg>
<div class="a" style="left:288px;top:757.85px;width:18px;height:18px;background:#3579d1;border-radius:3px;"></div>
<svg class="a" style="left:292.3px;top:762.15px;" width="9.6" height="9.6" viewBox="0 0 24 24" fill="none" stroke="#fff" stroke-width="5" stroke-linecap="round" stroke-linejoin="round"><polyline points="20 6 9 17 4 12"/></svg>
<svg class="a" style="left:419.2px;top:738.8px;" width="13.6" height="13.6" viewBox="0 0 24 24" fill="none" stroke="#5a616a" stroke-width="2" stroke-linecap="round" stroke-linejoin="round"><circle cx="12" cy="12" r="10"/><path d="M9.09 9a3 3 0 0 1 5.83 1c0 2-3 3-3 3"/><line x1="12" y1="17" x2="12.01" y2="17"/></svg>
<div class="a" style="left:544px;top:736.85px;width:18px;height:18px;background:#3579d1;border-radius:3px;"></div>
<svg class="a" style="left:548.3px;top:741.15px;" width="9.6" height="9.6" viewBox="0 0 24 24" fill="none" stroke="#fff" stroke-width="5" stroke-linecap="round" stroke-linejoin="round"><polyline points="20 6 9 17 4 12"/></svg>
<div class="a" style="left:672.1px;top:736.85px;width:18px;height:18px;background:#3579d1;border-radius:3px;"></div>
<svg class="a" style="left:676.4px;top:741.15px;" width="9.6" height="9.6" viewBox="0 0 24 24" fill="none" stroke="#fff" stroke-width="5" stroke-linecap="round" stroke-linejoin="round"><polyline points="20 6 9 17 4 12"/></svg>
<div class="a" style="left:800.2px;top:736.85px;width:18px;height:18px;background:#ea4a63;border-radius:3px;"></div>
<svg class="a" style="left:804.5px;top:741.15px;" width="9.6" height="9.6" viewBox="0 0 24 24" fill="none" stroke="#fff" stroke-width="5" stroke-linecap="round" stroke-linejoin="round"><polyline points="20 6 9 17 4 12"/></svg>
<div class="a t" style="top:845.35px;font-size:14px;line-height:20px;color:#636a71;letter-spacing:0.510px;left:85.4px;">Канали</div>
<svg class="a" style="left:139.5px;top:847.9px;" width="13" height="13" viewBox="0 0 24 24" fill="none" stroke="#41597d" stroke-width="2.1" stroke-linecap="round" stroke-linejoin="round"><circle cx="12" cy="12" r="10"/><line x1="12" y1="16.600" x2="12" y2="11.600" stroke-width="3"/><line x1="12" y1="7.600" x2="12.01" y2="7.600" stroke-width="3.300"/></svg>
<div class="a" style="left:288px;top:846.15px;width:18px;height:18px;background:#3579d1;border-radius:3px;"></div>
<svg class="a" style="left:292.3px;top:850.4499999999999px;" width="9.6" height="9.6" viewBox="0 0 24 24" fill="none" stroke="#fff" stroke-width="5" stroke-linecap="round" stroke-linejoin="round"><polyline points="20 6 9 17 4 12"/></svg>
<div class="a" style="left:544px;top:846.15px;width:18px;height:18px;background:#3579d1;border-radius:3px;"></div>
<svg class="a" style="left:548.3px;top:850.4499999999999px;" width="9.6" height="9.6" viewBox="0 0 24 24" fill="none" stroke="#fff" stroke-width="5" stroke-linecap="round" stroke-linejoin="round"><polyline points="20 6 9 17 4 12"/></svg>
<div class="a" style="left:672.1px;top:846.15px;width:18px;height:18px;background:#3579d1;border-radius:3px;"></div>
<svg class="a" style="left:676.4px;top:850.4499999999999px;" width="9.6" height="9.6" viewBox="0 0 24 24" fill="none" stroke="#fff" stroke-width="5" stroke-linecap="round" stroke-linejoin="round"><polyline points="20 6 9 17 4 12"/></svg>
<div class="a" style="left:800.2px;top:846.15px;width:18px;height:18px;background:#fff;border:2px solid #8a8a8a;border-radius:3.5px;"></div>
<svg class="a" style="left:419.2px;top:848.5px;" width="13.6" height="13.6" viewBox="0 0 24 24" fill="none" stroke="#5a616a" stroke-width="2" stroke-linecap="round" stroke-linejoin="round"><circle cx="12" cy="12" r="10"/><path d="M9.09 9a3 3 0 0 1 5.83 1c0 2-3 3-3 3"/><line x1="12" y1="17" x2="12.01" y2="17"/></svg>
<div class="a" style="left:923px;top:139px;width:850px;height:359px;background:linear-gradient(180deg,#fbfbfd 0,#fff 22px);border-radius:4px;"></div>
<div class="a t" style="top:170.66px;font-size:18px;line-height:22px;color:#2f3338;letter-spacing:0.074px;left:947.4px;-webkit-text-stroke:0.35px;">Плани та Звіти</div>
<div class="a" style="left:1704px;top:163px;width:45px;height:38px;background:#686d73;border-radius:3px;"></div>
<svg class="a" style="left:1719.5px;top:174px;" width="14.5" height="14.5" viewBox="0 0 24 24" fill="none" stroke="#fff" stroke-width="2.3" stroke-linecap="round" stroke-linejoin="round"><circle cx="12" cy="12" r="3"/><path d="M19.4 15a1.65 1.65 0 0 0 .33 1.82l.06.06a2 2 0 0 1 0 2.83 2 2 0 0 1-2.83 0l-.06-.06a1.65 1.65 0 0 0-1.820-.330 1.65 1.65 0 0 0-1 1.51V21a2 2 0 0 1-2 2 2 2 0 0 1-2-2v-.09A1.65 1.65 0 0 0 9 19.4a1.65 1.65 0 0 0-1.820.330l-.06.06a2 2 0 0 1-2.830 0 2 2 0 0 1 0-2.830l.06-.06a1.65 1.65 0 0 0 .33-1.820 1.65 1.65 0 0 0-1.510-1H3a2 2 0 0 1-2-2 2 2 0 0 1 2-2h.09A1.65 1.65 0 0 0 4.600 9a1.65 1.65 0 0 0-.330-1.820l-.06-.06a2 2 0 0 1 0-2.830 2 2 0 0 1 2.830 0l.06.06a1.65 1.65 0 0 0 1.820.330H9a1.65 1.65 0 0 0 1-1.510V3a2 2 0 0 1 2-2 2 2 0 0 1 2 2v.09a1.65 1.65 0 0 0 1 1.510 1.65 1.65 0 0 0 1.820-.330l.06-.06a2 2 0 0 1 2.830 0 2 2 0 0 1 0 2.830l-.06.06a1.65 1.65 0 0 0-.330 1.820V9a1.65 1.65 0 0 0 1.510 1H21a2 2 0 0 1 2 2 2 2 0 0 1-2 2h-.09a1.65 1.65 0 0 0-1.510 1z"/></svg>
<div class="a" style="left:947px;top:219px;width:802px;height:1px;background:#e7e8ea;"></div>
<div class="a" style="left:947px;top:236px;width:389px;height:37px;background:#f1f4f8;border-radius:3px;"></div>
<div class="a t" style="top:244.65px;font-size:14px;line-height:20px;color:#4d545c;letter-spacing:0.032px;left:963px;">Сьогодні</div>
<svg class="a" style="left:1308.8px;top:249px;" width="11.5" height="11.5" viewBox="0 0 24 24" fill="none" stroke="#3a4047" stroke-width="2.4" stroke-linecap="round" stroke-linejoin="round"><polyline points="6 9 12 15 18 9"/></svg>
<div class="a" style="left:947px;top:289px;width:802px;height:1px;background:#e7e8ea;"></div>
<div class="a" style="left:947px;top:312px;width:802px;height:165px;overflow:hidden">
<div class="a" style="left:0px;top:0px;width:820px;height:89px;background:#f1f4f8;"></div>
<div class="a" style="left:0px;top:0px;width:820px;height:1px;background:#dee2e6;"></div>
<div class="a" style="left:0px;top:153px;width:820px;height:1px;background:#dee2e6;"></div>
<div class="a" style="left:0px;top:0px;width:1px;height:154px;background:#dee2e6;"></div>
<div class="a" style="left:151px;top:0px;width:1px;height:154px;background:#dee2e6;"></div>
<div class="a" style="left:244px;top:0px;width:1px;height:154px;background:#dee2e6;"></div>
<div class="a" style="left:310px;top:0px;width:1px;height:154px;background:#dee2e6;"></div>
<div class="a" style="left:438px;top:0px;width:1px;height:154px;background:#dee2e6;"></div>
<div class="a" style="left:544px;top:45px;width:1px;height:109px;background:#dee2e6;"></div>
<div class="a" style="left:678px;top:45px;width:1px;height:109px;background:#dee2e6;"></div>
<div class="a t" style="top:13.85px;font-size:14px;line-height:20px;color:#596068;letter-spacing:0.205px;left:12.5px;-webkit-text-stroke:0.5px;">Ім ' я і Прізвище</div>
<svg class="a" style="left:127.2px;top:17.399999999999988px;" width="13.5" height="13.5" viewBox="0 0 24 24" fill="none" stroke="#c9cdd2" stroke-width="2.7" stroke-linecap="round" stroke-linejoin="round"><line x1="6" y1="19.500" x2="6" y2="4"/><polyline points="2.300 7.700 6 4 9.700 7.700"/><line x1="18" y1="4.800" x2="18" y2="20.300"/><polyline points="14.300 16.600 18 20.300 21.700 16.600"/></svg>
<div class="a t" style="top:13.85px;font-size:14px;line-height:20px;color:#596068;letter-spacing:0.078px;left:172.79999999999995px;-webkit-text-stroke:0.5px;">Роль</div>
<svg class="a" style="left:220.2px;top:17.399999999999988px;" width="13.5" height="13.5" viewBox="0 0 24 24" fill="none" stroke="#c9cdd2" stroke-width="2.7" stroke-linecap="round" stroke-linejoin="round"><line x1="6" y1="19.500" x2="6" y2="4"/><polyline points="2.300 7.700 6 4 9.700 7.700"/><line x1="18" y1="4.800" x2="18" y2="20.300"/><polyline points="14.300 16.600 18 20.300 21.700 16.600"/></svg>
<div class="a t" style="top:13.85px;font-size:14px;line-height:20px;color:#596068;letter-spacing:0.317px;left:256.5px;-webkit-text-stroke:0.5px;">KPI</div>
<svg class="a" style="left:288.2px;top:17.399999999999988px;" width="13.5" height="13.5" viewBox="0 0 24 24" fill="none" stroke="#c9cdd2" stroke-width="2.7" stroke-linecap="round" stroke-linejoin="round"><line x1="6" y1="19.500" x2="6" y2="4"/><polyline points="2.300 7.700 6 4 9.700 7.700"/><line x1="18" y1="4.800" x2="18" y2="20.300"/><polyline points="14.300 16.600 18 20.300 21.700 16.600"/></svg>
<div class="a t" style="top:13.85px;font-size:14px;line-height:20px;color:#596068;letter-spacing:0.295px;left:323.4000000000001px;-webkit-text-stroke:0.5px;">Час (години)</div>
<svg class="a" style="left:414.7px;top:17.399999999999988px;" width="13.5" height="13.5" viewBox="0 0 24 24" fill="none" stroke="#c9cdd2" stroke-width="2.7" stroke-linecap="round" stroke-linejoin="round"><line x1="6" y1="19.500" x2="6" y2="4"/><polyline points="2.300 7.700 6 4 9.700 7.700"/><line x1="18" y1="4.800" x2="18" y2="20.300"/><polyline points="14.300 16.600 18 20.300 21.700 16.600"/></svg>
<div class="a t" style="top:13.85px;font-size:14px;line-height:20px;color:#596068;letter-spacing:0.838px;left:327.82px;width:600px;text-align:center;-webkit-text-stroke:0.5px;">Ліди</div>
<div class="a t" style="top:56.35px;font-size:14px;line-height:20px;color:#596068;letter-spacing:0.089px;left:451px;-webkit-text-stroke:0.5px;">Створено</div>
<svg class="a" style="left:521.2px;top:59.89999999999999px;" width="13.5" height="13.5" viewBox="0 0 24 24" fill="none" stroke="#c9cdd2" stroke-width="2.7" stroke-linecap="round" stroke-linejoin="round"><line x1="6" y1="19.500" x2="6" y2="4"/><polyline points="2.300 7.700 6 4 9.700 7.700"/><line x1="18" y1="4.800" x2="18" y2="20.300"/><polyline points="14.300 16.600 18 20.300 21.700 16.600"/></svg>
<div class="a t" style="top:56.35px;font-size:14px;line-height:20px;color:#596068;letter-spacing:0.307px;left:556.8px;-webkit-text-stroke:0.5px;">Опрацьовано</div>
<svg class="a" style="left:654.2px;top:59.89999999999999px;" width="13.5" height="13.5" viewBox="0 0 24 24" fill="none" stroke="#c9cdd2" stroke-width="2.7" stroke-linecap="round" stroke-linejoin="round"><line x1="6" y1="19.500" x2="6" y2="4"/><polyline points="2.300 7.700 6 4 9.700 7.700"/><line x1="18" y1="4.800" x2="18" y2="20.300"/><polyline points="14.300 16.600 18 20.300 21.700 16.600"/></svg>
<div class="a t" style="top:56.35px;font-size:14px;line-height:20px;color:#596068;letter-spacing:0.423px;left:690.4000000000001px;-webkit-text-stroke:0.5px;">Конвертовано</div>
<svg class="a" style="left:792.0px;top:59.89999999999999px;" width="13.5" height="13.5" viewBox="0 0 24 24" fill="none" stroke="#c9cdd2" stroke-width="2.7" stroke-linecap="round" stroke-linejoin="round"><line x1="6" y1="19.500" x2="6" y2="4"/><polyline points="2.300 7.700 6 4 9.700 7.700"/><line x1="18" y1="4.800" x2="18" y2="20.300"/><polyline points="14.300 16.600 18 20.300 21.700 16.600"/></svg>
<div class="a t" style="top:100.15px;font-size:14px;line-height:20px;color:#3d5a80;letter-spacing:0.160px;left:12.5px;">Барська Ірина</div>
<div class="a t" style="top:100.15px;font-size:14px;line-height:20px;color:#636a71;letter-spacing:0.154px;left:163.4000000000001px;">Менеджер</div>
<div class="a t" style="top:120.95px;font-size:14px;line-height:20px;color:#636a71;letter-spacing:0.331px;left:163.4000000000001px;">проектів</div>
<div class="a t" style="top:100.15px;font-size:14px;line-height:20px;color:#636a71;letter-spacing:0.566px;left:256.5px;">0%</div>
<div class="a t" style="top:100.15px;font-size:14px;line-height:20px;color:#636a71;letter-spacing:0.251px;left:74.93px;width:600px;text-align:center;">00:00 (00:00)</div>
<div class="a t" style="top:100.15px;font-size:14px;line-height:20px;color:#636a71;letter-spacing:-0.047px;left:191.68px;width:600px;text-align:center;">0 (0)</div>
<div class="a t" style="top:100.15px;font-size:14px;line-height:20px;color:#636a71;letter-spacing:-0.047px;left:311.58px;width:600px;text-align:center;">0 (0)</div>
<div class="a t" style="top:100.15px;font-size:14px;line-height:20px;color:#636a71;letter-spacing:-0.047px;left:446.98px;width:600px;text-align:center;">0 (0)</div>
</div>
<div class="a" style="left:947px;top:466px;width:120px;height:8px;background:#b4b4b4;"></div>
<div class="a" style="left:923px;top:522px;width:850px;height:420px;background:linear-gradient(180deg,#fbfbfd 0,#fff 22px);border-radius:4px;"></div>
<div class="a t" style="top:553.56px;font-size:18px;line-height:22px;color:#2f3338;letter-spacing:0.198px;left:947.3px;-webkit-text-stroke:0.35px;">Інвентар</div>
<div class="a t" style="top:596.15px;font-size:14px;line-height:20px;color:#4a5058;letter-spacing:0.465px;left:965.5px;-webkit-text-stroke:0.25px;">Інвентар</div>
<div class="a t" style="top:596.15px;font-size:14px;line-height:20px;color:#5f666e;letter-spacing:0.549px;left:1062px;-webkit-text-stroke:0.25px;">Акти</div>
<div class="a" style="left:947px;top:627px;width:802px;height:2px;background:#e7e8eb;"></div>
<div class="a" style="left:947px;top:627px;width:97px;height:2px;background:#34a85a;"></div>
<div class="a" style="left:947px;top:658px;width:78px;height:38.5px;background:#fff;border:1px solid #d1d3d6;border-radius:4px;"></div>
<div class="a t" style="top:667.00px;font-size:15px;line-height:20px;color:#4d5260;letter-spacing:-0.185px;left:955.9px;">10</div>
<svg class="a" style="left:1004px;top:672.600px" width="8" height="10.600" viewBox="0 0 8 10.600"><path d="M0 4.600L4 0l4 4.600z M0 6L4 10.600l4-4.600z" fill="#343a40"/></svg>
<div class="a" style="left:1030px;top:658px;width:128px;height:38px;background:#686d73;border-radius:3px;"></div>
<div class="a" style="left:1113px;top:658px;width:1px;height:38px;background:#5b6269;"></div>
<div class="a t" style="top:666.75px;font-size:14px;line-height:20px;color:#fff;letter-spacing:0.187px;left:1046px;-webkit-text-stroke:0.3px;">Експорт</div>
<svg class="a" style="left:1128.3px;top:668.5px;" width="15.3" height="15.3" viewBox="0 0 24 24" fill="none" stroke="#fff" stroke-width="3" stroke-linecap="round" stroke-linejoin="round"><polyline points="23 4 23 10 17 10"/><polyline points="1 20 1 14 7 14"/><path d="M3.51 9a9 9 0 0 1 14.85-3.36L23 10M1 14l4.64 4.36A9 9 0 0 0 20.49 15"/></svg>
<div class="a" style="left:1522px;top:658px;width:227px;height:39px;background:#fff;border:1px solid #d1d3d6;border-radius:4px;"></div>
<div class="a" style="left:1522px;top:658px;width:45px;height:39px;background:#e9ecef;border:1px solid #d1d3d6;border-radius:4px 0 0 4px;"></div>
<svg class="a" style="left:1537.5px;top:671px;" width="13.5" height="13.5" viewBox="0 0 24 24" fill="none" stroke="#3f464d" stroke-width="2.4" stroke-linecap="round" stroke-linejoin="round"><circle cx="11" cy="11" r="8"/><line x1="21" y1="21" x2="16.65" y2="16.65"/></svg>
<div class="a t" style="top:667.87px;font-size:14.8px;line-height:20px;color:#a9aeb4;letter-spacing:-0.426px;left:1580px;">Пошук:</div>
<div class="a" style="left:947px;top:744px;width:802px;height:44.5px;background:#f1f4f8;"></div>
<div class="a" style="left:947px;top:788px;width:802px;height:1px;background:#dee2e6;"></div>
<div class="a t" style="top:755.35px;font-size:14px;line-height:20px;color:#596068;letter-spacing:-0.006px;left:958.8px;-webkit-text-stroke:0.5px;">Инв. №</div>
<svg class="a" style="left:1015.7px;top:758.9000000000001px;" width="13.5" height="13.5" viewBox="0 0 24 24" fill="none" stroke="#c9cdd2" stroke-width="2.7" stroke-linecap="round" stroke-linejoin="round"><line x1="6" y1="19.500" x2="6" y2="4"/><polyline points="2.300 7.700 6 4 9.700 7.700"/><line x1="18" y1="4.800" x2="18" y2="20.300"/><polyline points="14.300 16.600 18 20.300 21.700 16.600"/></svg>
<div class="a t" style="top:755.35px;font-size:14px;line-height:20px;color:#596068;letter-spacing:0.568px;left:1051px;-webkit-text-stroke:0.5px;">Артикул</div>
<div class="a t" style="top:755.35px;font-size:14px;line-height:20px;color:#596068;letter-spacing:0.244px;left:1168.7px;-webkit-text-stroke:0.5px;">Назва</div>
<svg class="a" style="left:1287.5px;top:758.9000000000001px;" width="13.5" height="13.5" viewBox="0 0 24 24" fill="none" stroke="#c9cdd2" stroke-width="2.7" stroke-linecap="round" stroke-linejoin="round"><line x1="6" y1="19.500" x2="6" y2="4"/><polyline points="2.300 7.700 6 4 9.700 7.700"/><line x1="18" y1="4.800" x2="18" y2="20.300"/><polyline points="14.300 16.600 18 20.300 21.700 16.600"/></svg>
<div class="a t" style="top:755.35px;font-size:14px;line-height:20px;color:#596068;letter-spacing:0.040px;left:1322.8px;-webkit-text-stroke:0.5px;">Теги</div>
<svg class="a" style="left:1359.7px;top:758.9000000000001px;" width="13.5" height="13.5" viewBox="0 0 24 24" fill="none" stroke="#c9cdd2" stroke-width="2.7" stroke-linecap="round" stroke-linejoin="round"><line x1="6" y1="19.500" x2="6" y2="4"/><polyline points="2.300 7.700 6 4 9.700 7.700"/><line x1="18" y1="4.800" x2="18" y2="20.300"/><polyline points="14.300 16.600 18 20.300 21.700 16.600"/></svg>
<div class="a t" style="top:755.35px;font-size:14px;line-height:20px;color:#596068;letter-spacing:0.583px;left:1395.2px;-webkit-text-stroke:0.5px;">Категорія</div>
<svg class="a" style="left:1496.5px;top:758.9000000000001px;" width="13.5" height="13.5" viewBox="0 0 24 24" fill="none" stroke="#c9cdd2" stroke-width="2.7" stroke-linecap="round" stroke-linejoin="round"><line x1="6" y1="19.500" x2="6" y2="4"/><polyline points="2.300 7.700 6 4 9.700 7.700"/><line x1="18" y1="4.800" x2="18" y2="20.300"/><polyline points="14.300 16.600 18 20.300 21.700 16.600"/></svg>
<div class="a t" style="top:755.35px;font-size:14px;line-height:20px;color:#596068;letter-spacing:-0.228px;left:1532px;-webkit-text-stroke:0.5px;">Стан</div>
<svg class="a" style="left:1571.5px;top:758.9000000000001px;" width="13.5" height="13.5" viewBox="0 0 24 24" fill="none" stroke="#c9cdd2" stroke-width="2.7" stroke-linecap="round" stroke-linejoin="round"><line x1="6" y1="19.500" x2="6" y2="4"/><polyline points="2.300 7.700 6 4 9.700 7.700"/><line x1="18" y1="4.800" x2="18" y2="20.300"/><polyline points="14.300 16.600 18 20.300 21.700 16.600"/></svg>
<div class="a t" style="top:755.35px;font-size:14px;line-height:20px;color:#596068;letter-spacing:0.241px;left:1606.7px;-webkit-text-stroke:0.5px;">Статус передачі</div>
<svg class="a" style="left:1725.0px;top:758.9000000000001px;" width="13.5" height="13.5" viewBox="0 0 24 24" fill="none" stroke="#c9cdd2" stroke-width="2.7" stroke-linecap="round" stroke-linejoin="round"><line x1="6" y1="19.500" x2="6" y2="4"/><polyline points="2.300 7.700 6 4 9.700 7.700"/><line x1="18" y1="4.800" x2="18" y2="20.300"/><polyline points="14.300 16.600 18 20.300 21.700 16.600"/></svg>
<div class="a t" style="top:799.95px;font-size:14px;line-height:20px;color:#636a71;left:958.8px;">2</div>
<div class="a t" style="top:799.95px;font-size:14px;line-height:20px;color:#636a71;letter-spacing:0.555px;left:1051px;">45654645645</div>
<div class="a t" style="top:799.95px;font-size:14px;line-height:20px;color:#636a71;left:1168.7px;">Стол "Летняя липа"</div>
<div class="a t" style="top:799.95px;font-size:14px;line-height:20px;color:#636a71;letter-spacing:-0.155px;left:1395.2px;">Офисная мебель</div>
<div class="a t" style="top:799.95px;font-size:14px;line-height:20px;color:#636a71;letter-spacing:-0.087px;left:1532px;">Новое</div>
<div class="a" style="left:1647px;top:800px;width:50px;height:20px;background:#86c425;border-radius:10px;"></div>
<div class="a" style="left:1678px;top:801px;width:18px;height:18px;background:#fff;border-radius:9px;"></div>
<div class="a" style="left:0px;top:832px;width:1862px;height:18px;background:linear-gradient(180deg,rgba(0,0,0,0) 0,rgba(0,0,0,.03) 55%,rgba(0,0,0,.09) 100%);"></div>
<div class="a" style="left:0px;top:850px;width:1862px;height:75px;background:#fff;"></div>
<div class="a" style="left:1733px;top:874px;width:112px;height:37px;background:#2fb162;border-radius:3px;box-shadow:0 1px 3px rgba(0,0,0,.25);"></div>
<svg class="a" style="left:1748.8px;top:885.3px;" width="13.7" height="13.7" viewBox="0 0 24 24" fill="none" stroke="#fff" stroke-width="2.7" stroke-linecap="round" stroke-linejoin="round"><polyline points="20 6 9 17 4 12"/></svg>
<div class="a t" style="top:882.35px;font-size:14px;line-height:20px;color:#fff;letter-spacing:0.141px;left:1769px;-webkit-text-stroke:0.3px;">Зберегти</div>
<div class="a" style="left:1789px;top:805px;width:60px;height:60px;background:#2b3643;border-radius:30px;box-shadow:0 3px 10px rgba(0,0,0,.28);"></div>
<svg class="a" style="left:1805px;top:820.3px;" width="28.5" height="28.5" viewBox="0 0 24 24" fill="none" stroke="#fff" stroke-width="2.8" stroke-linecap="round" stroke-linejoin="round"><path d="M21 11.5a8.38 8.38 0 0 1-.9 3.8 8.5 8.5 0 0 1-7.6 4.7 8.38 8.38 0 0 1-3.8-.9L3 21l1.9-5.7a8.38 8.38 0 0 1-.9-3.8 8.5 8.5 0 0 1 4.7-7.6 8.38 8.38 0 0 1 3.8-.9h.5a8.48 8.48 0 0 1 8 8v.5z"/></svg>
<div class="a" style="left:1789px;top:805px;width:18px;height:18px;background:#2fb162;border-radius:9px;"></div>
<div class="a t" style="top:807.14px;font-size:12px;line-height:14px;color:#fff;font-weight:700;left:1498.00px;width:600px;text-align:center;">0</div>
</div>
</body></html>
